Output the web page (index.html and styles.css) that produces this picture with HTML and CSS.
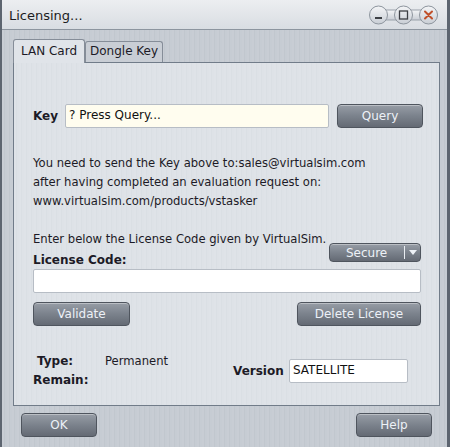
FILE: index.html
```html
<!DOCTYPE html>
<html>
<head>
<meta charset="utf-8">
<link rel="stylesheet" href="styles.css">
</head>
<body>
<div class="window">
  <div class="titlebar">
    <span class="title">Licensing...</span>
    <svg class="controls" width="76" height="22" viewBox="0 0 76 22">
      <defs>
        <linearGradient id="cg" x1="0" y1="0" x2="0" y2="1">
          <stop offset="0" stop-color="#f4f5f7"/>
          <stop offset="1" stop-color="#c9ced5"/>
        </linearGradient>
      </defs>
      <rect x="8" y="6" width="60" height="10" rx="4" fill="url(#cg)" stroke="#9aa1aa" stroke-width="1"/>
      <circle cx="9.5" cy="11" r="9" fill="url(#cg)" stroke="#8e959e" stroke-width="1"/>
      <circle cx="34.5" cy="11" r="9" fill="url(#cg)" stroke="#8e959e" stroke-width="1"/>
      <circle cx="59.5" cy="11" r="9" fill="url(#cg)" stroke="#8e959e" stroke-width="1"/>
      <rect x="6" y="13" width="7" height="2" fill="#3c3f44"/>
      <rect x="30.5" y="7" width="8" height="8" fill="none" stroke="#3c3f44" stroke-width="1.3"/>
      <path d="M56 7.5 L63 14.5 M63 7.5 L56 14.5" stroke="#c0502a" stroke-width="2" stroke-linecap="round"/>
    </svg>
  </div>
  <div class="body">
    <div class="tabs">
      <div class="tab active">LAN Card</div>
      <div class="tab">Dongle Key</div>
    </div>
    <div class="panel">
      <div class="key-row">
        <span class="lbl key-lbl">Key</span>
        <div class="field cream">? Press Query...</div>
        <button class="btn query">Query</button>
      </div>
      <div class="info">
        <p>You need to send the Key above to:sales@virtualsim.com</p>
        <p>after having completed an evaluation request on:</p>
        <p>www.virtualsim.com/products/vstasker</p>
      </div>
      <div class="license-head">
        <div>
          <p class="enter">Enter below the License Code given by VirtualSim.</p>
          <p class="lbl code-lbl">License Code:</p>
        </div>
        <button class="btn secure"><span>Secure</span><span class="split"></span><span class="caret"></span></button>
      </div>
      <div class="field code"></div>
      <div class="actions">
        <button class="btn validate">Validate</button>
        <button class="btn delete">Delete License</button>
      </div>
      <div class="status">
        <div class="status-grid">
          <span class="lbl type-lbl">Type:</span><span class="val">Permanent</span>
          <span class="lbl">Remain:</span><span class="val"></span>
        </div>
        <div class="version">
          <span class="lbl">Version</span>
          <div class="field ver">SATELLITE</div>
        </div>
      </div>
    </div>
    <div class="footer">
      <button class="btn foot">OK</button>
      <button class="btn foot">Help</button>
    </div>
  </div>
</div>
</body>
</html>
```
FILE: styles.css
```css
* { box-sizing: border-box; }
html, body { margin: 0; padding: 0; }
body {
  width: 450px;
  height: 447px;
  overflow: hidden;
  font-family: "DejaVu Sans", Verdana, sans-serif;
  font-size: 11.6px;
  color: #1c1a26;
  background: #c5cbd2;
}
p { margin: 0; }
.window {
  width: 450px;
  height: 447px;
  border-left: 2px solid #5d6570;
  border-right: 3px solid #5d6570;
  background: repeating-linear-gradient(90deg, #c8cdd4 0 2px, #c1c7ce 2px 3px, #c6ccd3 3px 5px);
}
.titlebar {
  height: 30px;
  border-bottom: 1px solid #8d959f;
  background: linear-gradient(#eceef1, #d9dde2);
  display: flex;
  align-items: center;
  justify-content: space-between;
  padding: 0 0 0 7px;
}
.title {
  font-size: 13px;
  color: #1c1c22;
  margin-top: 2px;
}
.controls { margin-right: 2px; margin-top: 1px; }
.body { padding: 9px 0 0 11px; }
.tabs {
  display: flex;
  align-items: flex-end;
  height: 23px;
  position: relative;
  z-index: 1;
}
.tab {
  font-size: 12px;
  white-space: nowrap;
  border: 1px solid #858d98;
  border-bottom: none;
  border-radius: 3px 3px 0 0;
  background: #c9ced5;
  height: 21px;
  padding: 2px 0 0 4px;
  width: 78px;
}
.tab.active {
  height: 24px;
  width: 72px;
  padding: 4px 0 0 7px;
  background: #e0e4e9;
  margin-bottom: -1px;
}
.panel {
  width: 427px;
  height: 344px;
  border: 1px solid #717c89;
  background: repeating-linear-gradient(90deg, #dfe3e8 0 2px, #dadfe4 2px 3px, #dee2e7 3px 5px);
  padding: 0 0 0 19px;
}
.lbl { font-weight: bold; }
.key-row {
  display: flex;
  align-items: center;
  margin-top: 41px;
  height: 24px;
}
.key-lbl { font-size: 12px; width: 32px; }
.field {
  height: 24px;
  border: 1px solid #b7bdc5;
  border-radius: 2px;
  background: #fff;
  font-size: 12px;
  padding: 3px 3px 0 3px;
  color: #111;
}
.cream { width: 264px; background: #fffdef; }
.btn {
  font-family: inherit;
  font-size: 12px;
  color: #edf1f7;
  background: linear-gradient(#979da6, #7b828c 50%, #646a74);
  border: 1px solid #4f555e;
  border-radius: 4px;
  height: 24px;
  padding: 0;
  box-shadow: inset 0 1px 0 rgba(255,255,255,0.35);
}
.query { width: 86px; margin-left: 8px; }
.info { margin-top: 26px; line-height: 19px; }
.license-head {
  margin-top: 19px;
  display: flex;
  justify-content: space-between;
  width: 388px;
}
.enter { line-height: 19px; }
.code-lbl { line-height: 18px; margin-top: 2px; font-size: 12px; }
.secure {
  width: 92px;
  height: 19px;
  margin-top: 13px;
  display: flex;
  align-items: center;
  padding: 0 0 0 16px;
}
.secure .split {
  width: 1px;
  height: 13px;
  background: #e9edf2;
  margin-left: 17px;
}
.secure .caret {
  width: 0; height: 0;
  border-left: 4px solid transparent;
  border-right: 4px solid transparent;
  border-top: 5px solid #eef2f7;
  margin-left: 4px;
}
.code { width: 388px; height: 24px; margin-top: 0; }
.actions {
  margin-top: 9px;
  width: 388px;
  display: flex;
  justify-content: space-between;
}
.validate { width: 97px; }
.delete { width: 124px; }
.status {
  margin-top: 26px;
  display: flex;
  align-items: flex-start;
}
.status-grid {
  display: grid;
  grid-template-columns: 72px 120px;
  line-height: 19px;
  font-size: 12px;
}
.status-grid .val { font-size: 11.6px; }
.type-lbl { padding-left: 4px; }
.version {
  display: flex;
  align-items: center;
  margin-top: 7px;
  margin-left: 8px;
}
.version .lbl { font-size: 12px; width: 56px; }
.ver { width: 119px; }
.footer {
  display: flex;
  justify-content: space-between;
  width: 419px;
  margin-top: 7px;
  padding-left: 8px;
}
.foot { width: 76px; }
```
